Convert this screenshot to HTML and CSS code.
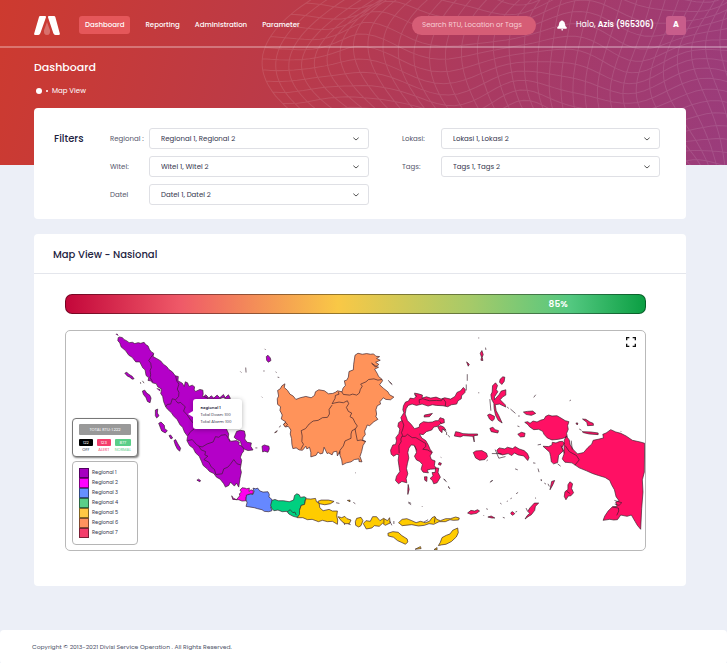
FILE: index.html
```html
<!DOCTYPE html>
<html lang="id">
<head>
<meta charset="utf-8">
<meta name="viewport" content="width=device-width, initial-scale=1">
<title>Dashboard</title>
<link rel="stylesheet" href="styles.css">
</head>
<body>
<header class="hero">
  <svg class="mesh" viewBox="260 0 467 164" preserveAspectRatio="xMaxYMin slice" aria-hidden="true"><path id="mesh-lines"/></svg>
  <div class="topbar">
    <a class="logo" href="#" aria-label="Home">
      <svg viewBox="0 0 78 57" aria-hidden="true">
        <path d="M39 18 48 43Q50 57 39 57Q28 57 30 43Z" fill="#d9706c"/>
        <path d="M17 0H35L36 4 19 52Q17 57 13 57H3Q-1 57 1 51L15 3Z" fill="#fff"/>
        <path d="M43 0H60Q63 0 64 3L77 51Q79 57 74 57H64Q60 57 58 52L42 4Z" fill="#fff"/>
      </svg>
    </a>
    <nav class="nav">
      <a class="active" href="#">Dashboard</a>
      <a href="#">Reporting</a>
      <a href="#">Administration</a>
      <a href="#">Parameter</a>
    </nav>
    <input class="search" type="text" aria-label="Search" placeholder="Search RTU, Location or Tags">
    <button class="bell" aria-label="Notifications">
      <svg viewBox="0 0 30 33" aria-hidden="true"><path d="M13 2Q15-1 17 2Q24 4 24 12Q24 19 29 22Q31 26 27 26H3Q-1 26 1 22Q6 19 6 12Q6 4 13 2ZM13 27H18L17 31Q15 34 14 31Z" fill="#fff"/></svg>
    </button>
    <span class="hello">Halo, <b>Azis (965306)</b></span>
    <button class="avatar">A</button>
  </div>
  <div class="heading">
    <h1>Dashboard</h1>
    <div class="crumb"><i class="home"></i><i class="dot"></i><span>Map View</span></div>
  </div>
</header>

<main>
  <section class="card filters">
    <h2>Filters</h2>
    <div class="fields">
      <label for="regional">Regional :</label>
      <div class="select"><select id="regional"><option>Regional 1, Regional 2</option></select><svg viewBox="0 0 18 12"><path d="M1 2 9 9 17 2"/></svg></div>
      <label for="witel">Witel:</label>
      <div class="select"><select id="witel"><option>Witel 1, Witel 2</option></select><svg viewBox="0 0 18 12"><path d="M1 2 9 9 17 2"/></svg></div>
      <label for="datel">Datel</label>
      <div class="select"><select id="datel"><option>Datel 1, Datel 2</option></select><svg viewBox="0 0 18 12"><path d="M1 2 9 9 17 2"/></svg></div>
    </div>
    <div class="fields">
      <label for="lokasi">Lokasi:</label>
      <div class="select"><select id="lokasi"><option>Lokasi 1, Lokasi 2</option></select><svg viewBox="0 0 18 12"><path d="M1 2 9 9 17 2"/></svg></div>
      <label for="tags">Tags:</label>
      <div class="select"><select id="tags"><option>Tags 1, Tags 2</option></select><svg viewBox="0 0 18 12"><path d="M1 2 9 9 17 2"/></svg></div>
    </div>
  </section>

  <section class="card">
    <h2 class="card-title">Map View - Nasional</h2>
    <div class="card-body">
      <div class="scale"><span>85%</span></div>
      <div class="map">
        <svg class="islands" viewBox="65 330 581 220" role="img" aria-label="Peta Indonesia">
          <!-- Sumatra -->
          <g transform="translate(60 325) scale(.33333)" fill="#b400c8">
            <path d="M172 35 176 33 185 35 190 41 197 44 205 50 215 49 222 53 232 50 240 52 250 49 255 56 262 60 266 70 272 78 279 82 277 92 288 98 300 105 308 115 318 122 325 131 335 138 344 150 353 152 352 165 365 172 371 182 374 168 381 171 385 182 395 178 402 183 401 192 405 197 418 191 427 193 428 205 426 212 440 214 446 232 470 262 492 290 498 310 505 325 503 338 511 347 528 345 537 350 535 357 550 365 550 377 545 383 540 395 544 405 540 428 543 440 539 458 535 485 528 473 522 482 510 470 505 480 495 485 490 475 479 461 468 455 460 444 447 438 440 430 428 420 423 408 416 392 405 382 398 368 387 360 379 345 381 332 372 320 366 305 358 297 350 282 338 270 333 262 320 250 315 243 309 228 306 212 300 203 303 190 291 183 287 174 275 171 270 165 262 164 264 156 256 149 253 132 246 126 237 108 225 108 214 94 204 88 194 74 181 63 177 51 171 44Z"/>
            <path d="M278 85 270 95 264 104 270 112 272 125 268 134 270 147 268 155 276 168M345 150 348 165 355 175 350 190 355 200 354 212 345 222 335 219 330 235 320 236 315 243M345 224 352 232 360 230 368 238 374 243 369 256 380 268 388 280 396 290 402 297 401 310 390 318 382 330M381 345 395 342 408 357 416 362 425 364 440 355 458 349 465 333 475 335 482 329 495 327 505 338 508 348M415 362 422 373 435 378 433 388 442 392 430 402 445 410 452 424 462 432 466 447 485 445 490 430 502 425 510 416 520 402 530 415 541 418" fill="none"/>
            <path d="M192 142 198 139 205 146 214 151 220 159 214 160 207 154 200 151ZM245 196 252 193 258 202 267 208 271 217 268 231 260 227 256 216 248 206ZM284 253 291 250 290 262 295 270 288 277 284 270ZM294 293 301 289 311 299 312 309 320 315 314 322 303 316ZM325 330 330 328 336 337 331 340ZM340 345 345 342 352 355 360 368 357 377 350 370 344 358ZM618 92 623 88 630 96 632 104 624 109 619 103Z"/>
            <path d="M430 212 436 207 445 217 452 210 460 217 470 208 478 216 489 206 494 216 504 207 510 218 498 220 488 215 475 220 460 220 445 219ZM529 317 540 314 552 316 555 329 553 340 560 350 573 352 571 362 578 373 563 375 552 371 543 360 540 347 528 341 521 335ZM605 362 612 358 618 360 626 362 627 370 623 380 613 377 607 379ZM409 464 414 461 420 465 418 469ZM165 25 169 24 172 29M239 169 240 174M245 165 250 172M288 188 299 192 296 196M540 137 543 140M556 125 557 140M611 134 611 136M613 69 615 71M604 213 606 215M585 367 591 367"/>
          </g>
          <!-- Java -->
          <g transform="translate(160 390) scale(.33333)">
            <path fill="#f0e" d="M214 316 217 322 228 328 238 316 237 310 243 305 239 299 245 292 254 293 259 295 267 293 266 303 272 298 279 301 278 310 263 312 257 321 257 331 245 332 235 328 217 327Z"/>
            <path fill="#68f" d="M278 293 286 295 292 293 298 301 308 305 323 304 327 312 326 320 334 326 338 339 337 346 331 350 335 361 325 364 312 363 305 358 292 355 282 352 257 348 260 337 257 328 258 314 271 311 278 312 281 303Z"/>
            <path fill="#00d080" d="M335 330 344 327 354 331 370 331 387 334 400 329 403 315 410 310 417 313 421 321 432 319 438 322 434 332 435 344 423 345 419 358 422 371 411 381 399 378 386 371 380 363 366 364 353 359 341 361 335 355 331 345ZM380 365 390 358 398 367 404 365 408 374"/>
          </g>
          <!-- Bali, Nusa Tenggara, southern Maluku -->
          <g transform="translate(320 470) scale(.33333)">
            <path fill="#fc0" d="M-43 85-28 86-14 84-11 94-3 99-1 112 9 121 27 117 37 122 52 122 50 137 53 149 52 162 37 153 22 154 7 150-5 154-24 147-38 148-52 142-69 142-62 132-62 120-57 105-47 102ZM-7 93 3 89 25 89 42 93 31 100 14 103-2 100ZM54 139 65 142 74 138 81 145 93 149 88 160 75 160 65 153ZM106 154 110 144 123 141 129 151 123 166 116 170 107 165ZM130 160 138 151 151 153 158 139 170 139 180 151 191 144 203 151 209 142 211 158 196 165 188 159 178 168 163 166 156 173 139 176ZM236 157 247 147 261 145 276 151 289 157 302 153 317 157 329 153 337 142 345 138 351 147 362 151 378 145 392 145 408 140 419 143 417 149 401 150 391 148 377 154 358 154 342 162 328 160 314 165 296 167 276 163 247 166ZM204 189 219 184 235 186 246 196 262 206 264 215 257 222 244 216 233 211 221 201 205 197ZM356 226 362 216 367 202 380 195 391 191 399 180 414 173 416 187 410 200 395 214 379 222 365 224ZM286 237 302 229 304 235ZM343 238 352 232 352 239ZM82 90 90 89 90 94Z"/>
            <path fill="#ff1064" d="M444 128 454 120 465 122 474 118 480 122 471 129 454 132ZM575 126 580 124 586 130 579 135 574 130ZM617 146 623 136 631 129 625 123 632 112 645 98 658 98 648 108 646 120 636 133 626 139ZM740 88 735 78 737 64 746 57 746 43 752 34 760 40 757 54 763 67 755 76 747 77ZM505 140 515 137 526 143 517 143ZM697 33 706 30 700 44 692 58 695 43ZM265 42 268 57 264 72 264 58Z"/>
            <path d="M48 97 58 99M100 96 106 100M72 158 74 164M85 161 92 163M192 145V160M210 153 216 165M222 152V161M265 97 274 103M306 107 308 109M492 135 494 137M500 115 505 117M542 98 546 101M550 141 556 143M562 93 565 92M573 85 577 83M590 70 596 66M588 125 593 123M620 113 624 122M647 82 650 84M664 29 668 31M675 38 680 41M686 40 690 48M372 25 381 35M386 47 390 55M513 33 520 30M742 62 753 70M313 155 325 148M346 140 344 157" fill="none"/>
          </g>
          <!-- Kalimantan -->
          <g transform="translate(260 325) scale(.33333)" fill="#ff935a">
            <path d="M285 88 294 82 307 85 320 83 332 85 341 84 348 91 359 92 350 98 361 103 347 109 357 116 346 123 335 112 348 121 356 124 344 130 352 143 356 152 366 160 368 165 359 177 370 187 384 198 389 207 402 214 392 222 378 221 370 216 360 228 362 235 352 240 348 252 350 265 348 273 354 281 342 288 329 300 322 298 318 308 314 316 316 327 309 336 308 344 317 347 309 360 305 378 300 393 306 409 297 408 297 400 283 402 273 409 259 412 247 418 245 403 240 390 239 378 232 391 230 377 220 379 216 388 206 382 201 384 192 365 188 383 180 385 174 379 168 389 152 394 152 380 148 365 140 370 137 362 127 374 117 373 108 367 98 369 95 356 94 339 90 325 92 313 84 302 76 304 70 295 77 289 63 280 66 268 59 254 61 243 52 236 51 219 55 211 52 194 60 189 65 180 74 174 72 185 82 194 89 205 99 211 107 221 120 216 137 212 153 216 163 209 166 198 176 192 193 195 205 204 218 203 227 199 232 195 246 198 249 187 256 179 253 165 260 163 265 154 267 137 280 132 281 115Z"/>
            <path d="M245 198 250 206 269 208 278 205 290 208 298 202 301 191 307 181 302 175 318 168 326 161 342 159 354 163 366 161M234 198 237 205 226 209 225 218 216 234 222 232 237 229 250 231 262 225 266 234 259 245 265 257 275 262 270 273 279 278 285 291 292 301 286 310 276 315 273 325 273 338 255 346 250 361 240 374 238 386M216 238 207 251 208 265 202 275 187 276 174 284 159 286 147 295 136 309 123 315 126 331 125 348 130 356 122 371M285 309 288 325 292 345 303 343 317 348" fill="none"/>
            <path d="M70 297 76 290 82 297 75 304ZM43 321 51 315 48 320ZM56 305 62 300M385 163 391 171 397 176 389 168M285 442 287 442M14 69 15 70M10 136 12 136M46 138 49 140M52 154 57 155"/>
          </g>
          <!-- Sulawesi, Maluku, Papua -->
          <g transform="translate(380 325) scale(.33333)" fill="#ff1064">
            <path d="M71 240 77 229 86 226 91 217 103 219 109 211 104 202 115 204 128 208 127 217 140 213 153 217 169 214 184 220 195 216 213 220 226 212 232 200 243 195 251 185 257 191 256 200 246 210 245 219 235 225 231 235 215 237 204 243 190 240 170 239 158 237 145 241 127 235 110 239 97 235 85 239 79 249 76 265 83 285 94 296 104 309 118 305 120 295 131 288 145 290 158 289 167 285 176 285 181 276 193 280 194 291 183 294 173 302 162 304 156 313 140 318 130 327 119 325 126 337 138 345 146 359 151 371 158 380 151 391 155 402 166 406 164 420 170 430 152 431 142 434 146 442 130 440 124 431 128 417 120 408 110 403 104 392 110 381 108 370 103 359 94 358 87 368 84 381 87 397 83 413 80 429 84 445 79 459 81 472 66 468 56 475 47 465 50 452 60 438 57 419 55 404 57 388 51 386 41 392 34 386 32 374 39 358 47 357 50 346 48 336 57 324 60 310 54 302 56 291 66 285 63 276 72 261 69 252Z"/>
            <path d="M66 283 72 298 69 310 65 321 68 329 63 340 64 348 57 360 58 383M67 332 76 332 83 326 97 336 108 336 123 345 138 354 138 363 129 371 143 373 157 381M119 233 118 222 129 219 149 225 170 224 185 225 190 218 198 229 197 241M180 287 185 294M103 206 111 212M104 360 111 374" fill="none"/>
            <path d="M134 268 145 266 158 263 149 273 133 274ZM174 303 183 300 192 304 199 314 188 310 187 321 180 315ZM224 331 228 318 238 320 250 324 268 325 294 325 294 329 283 330 284 349 280 332 251 330 242 334ZM281 381 289 376 307 375 321 383 324 393 316 402 300 404 288 397ZM302 82 307 74 311 86 308 94 310 104 304 103 306 94ZM261 108 269 115 266 121ZM362 160 370 153 376 154 374 167 367 176 360 169ZM339 180 348 171 354 179 350 191 355 198 345 213 345 222 359 206 365 196 379 192 379 208 370 213 362 222 377 237 379 244 360 235 347 237 350 255 358 270 368 292 356 284 348 268 344 249 343 233 336 220 334 207 338 199ZM331 308 340 305 347 312 357 315 355 322 335 318ZM324 268 331 265 345 272 344 281 338 286 330 280ZM415 326 426 320 437 323 435 333 423 334ZM432 259 444 257 460 256 469 263 456 269 440 266ZM352 374 359 367 376 370 384 365 400 369 407 363 419 370 434 375 444 384 449 396 445 405 433 391 416 388 405 382 397 390 386 384 369 388 356 384ZM436 290 445 288 452 293 461 286 473 289 485 283 494 281 499 272 508 268 518 271 533 270 545 277 558 285 569 288 565 300 567 311 562 323 564 333 551 338 538 341 518 343 504 337 494 326 490 317 478 311 463 312 450 303 446 297ZM491 362 508 363 518 358 519 350 530 352 540 348 550 347 555 353 548 366 552 376 538 389 535 411 523 415 516 409 514 393 511 380 500 370ZM555 344 561 331 570 343 573 358 583 373 595 385 613 381 626 366 638 355 642 344 657 341 673 337 671 326 681 322 695 312 710 319 725 323 741 331 760 344 783 349 797 353 796 440 790 463 792 500 788 550 785 612 775 600 768 588 757 569 744 573 725 569 715 583 704 584 692 582 672 585 677 572 687 557 700 544 714 543 710 530 720 526 711 514 706 493 697 477 692 465 678 456 658 450 640 444 622 436 600 427 578 412 557 410 549 400 554 386ZM610 280 620 281 632 289 642 293 643 299 625 300 623 290ZM609 318 635 319 657 322 657 327 630 325 613 321ZM590 292 596 292 594 298ZM134 454 142 454 141 468 135 464ZM151 459 160 451 157 441 166 441 168 427 177 428 175 441 182 455 172 472 162 475 158 465ZM178 411 185 413 183 419 176 417Z"/>
            <path d="M558 360 570 378 592 390 600 403 587 419M545 360 556 383M576 345 579 372M700 545 718 548 719 557 713 570M706 525 728 532 720 540 707 536M183 395 185 396M190 311 201 320 200 328M204 328 211 335M263 145V165M260 176V194M296 36H299M318 65 319 72M296 201H299M331 220 334 255M383 244 388 248M393 250 408 263M416 271H421M414 301 420 303M463 215 469 207M571 225 575 223M725 316 726 318M347 372 358 398 378 393M337 384H366M321 406 325 403M461 412 468 413M476 429 479 440M407 430 415 433M484 463H488M331 471 339 465M192 461 198 465M206 485 210 489M86 530 94 534M475 358 485 356M535 415 544 422M600 310 607 314" fill="none"/>
          </g>
        </svg>
        <button class="expand" aria-label="Fullscreen"><svg viewBox="0 0 30 30"><path d="M2 10V2H10M20 2H28V10M28 20V28H20M10 28H2V20"/></svg></button>
        <div class="tip"><b>Regional 1</b><span>Total Down: 100</span><span>Total Alarm: 100</span></div>
        <div class="panels">
          <div class="stats">
            <div class="total">TOTAL RTU: 1.222</div>
            <div class="stat off"><b>122</b>OFF</div>
            <div class="stat alert"><b>123</b>ALERT</div>
            <div class="stat normal"><b>877</b>NORMAL</div>
          </div>
          <ul class="legend">
            <li class="r1">Regional 1</li>
            <li class="r2">Regional 2</li>
            <li class="r3">Regional 3</li>
            <li class="r4">Regional 4</li>
            <li class="r5">Regional 5</li>
            <li class="r6">Regional 6</li>
            <li class="r7">Regional 7</li>
          </ul>
        </div>
      </div>
    </div>
  </section>
</main>
<footer>Copyright © 2013-2021 Divisi Service Operation . All Rights Reserved.</footer>
<script src="mesh.js"></script>
</body>
</html>
```
FILE: styles.css
```css
* { box-sizing: border-box; }
body {
  margin: 0;
  min-height: 100vh;
  display: flex;
  flex-direction: column;
  background: #eceff7;
  color: #23233f;
  font: 7px/10px Poppins, Inter, sans-serif;
}
button, input, select { font: inherit; color: inherit; border: 0; margin: 0; padding: 0; background: none; }
a { color: inherit; text-decoration: none; }
h1, h2 { margin: 0; font-weight: 500; }
svg { display: block; }

.hero {
  position: relative;
  color: #fff;
  padding-bottom: 69px;
  background: linear-gradient(105deg, #cd3a2f 0%, #b93a4b 42%, #a93a63 68%, #9a3c7c 100%);
}
.mesh { position: absolute; top: 0; right: 0; height: 100%; width: 65%; }
.mesh path { fill: none; stroke: #fff; stroke-opacity: .11; stroke-width: 1; }
.topbar {
  position: relative;
  display: flex;
  align-items: center;
  height: 48px;
  padding: 4px 41px 0 34px;
  border-bottom: 2px solid rgba(255, 255, 255, .3);
}
.logo svg { width: 26px; height: 19px; }
.nav { display: flex; align-items: center; gap: 15px; margin: 0 auto 0 19px; font-weight: 500; }
.nav .active { padding: 4px 6px; border-radius: 3px; background: #e5575a; }
.search {
  width: 124px;
  height: 19px;
  padding: 0 8px 0 10px;
  border-radius: 10px;
  background: #d65d76;
}
.search::placeholder { color: #f6cdd5; opacity: 1; }
.bell { margin: 0 9px 0 21px; }
.bell svg { width: 10px; height: 11px; }
.hello { font-size: 8px; }
.hello b { font-weight: 600; }
.avatar { width: 20px; height: 19px; margin-left: 12px; border-radius: 3px; background: #c85d8b; font-size: 8px; font-weight: 700; }
.heading { position: relative; padding: 12px 34px 0; }
h1 { font-size: 11px; line-height: 14px; }
.crumb { display: flex; align-items: center; gap: 4px; padding: 12px 2px 0; }
.home { width: 6px; height: 6px; border-radius: 50%; background: #fff; }
.dot { width: 2px; height: 2px; border-radius: 50%; background: #fff; }

main { position: relative; margin: -57px 41px 44px 34px; display: grid; gap: 15px; }
.card { background: #fff; border-radius: 4px; }
.card h2 { font-size: 10px; line-height: 15px; }
.filters {
  display: grid;
  grid-template-columns: 56px minmax(0, 259fr) minmax(0, 291fr);
  padding: 20px 26px 14px 20px;
}
.filters h2 { padding-top: 3px; }
.fields {
  display: grid;
  grid-template-columns: 39px 1fr;
  gap: 7px 0;
  align-content: start;
  align-items: center;
  color: #55566b;
}
.fields + .fields { margin-left: 33px; }
.select { position: relative; }
.select select {
  display: block;
  width: 100%;
  height: 21px;
  padding: 0 24px 0 11px;
  border: 1px solid #dfe0e5;
  border-radius: 3px;
  appearance: none;
  background: #fff;
  color: #33344c;
}
.select svg { position: absolute; right: 10px; top: 9px; width: 6px; height: 4px; fill: none; stroke: #555; stroke-width: 3; pointer-events: none; }

.card-title { padding: 13px 19px 11px; border-bottom: 1px solid #e4e6ec; }
.card-body { display: grid; gap: 16px; padding: 20px 40px 35px 31px; }
.scale {
  position: relative;
  height: 20px;
  border: 1px solid rgba(0, 0, 0, .4);
  border-radius: 7px;
  background: linear-gradient(90deg, #c3063a, #ef5a68 20%, #f9c846 47%, #a5ca69 70%, #53c880 87%, #0a9e42) border-box;
}
.scale span { position: absolute; left: 85%; top: 4px; transform: translateX(-50%); color: #fff; font-size: 9px; font-weight: 600; }
.map { position: relative; border: 1px solid #b9b9b9; border-radius: 5px; overflow: hidden; }
.islands { width: 100%; height: auto; stroke: #38202c; stroke-width: 2; stroke-linejoin: round; }
.expand { position: absolute; right: 9px; top: 6px; }
.expand svg { width: 10px; height: 10px; fill: none; stroke: #111; stroke-width: 4; }

.tip {
  position: absolute;
  left: 22%;
  top: 31%;
  width: 49px;
  display: grid;
  padding: 5px 7px 4px;
  border-radius: 3px;
  background: #fff;
  box-shadow: 0 1px 5px rgba(0, 0, 0, .3);
  font-size: 4px;
  line-height: 7px;
  color: #33344a;
  white-space: nowrap;
}
.tip b { font-weight: 600; }
.tip::before { content: ""; position: absolute; left: -5px; top: 12px; border: 3px solid transparent; border-right: 5px solid #fff; border-left: 0; }
.panels { position: absolute; left: 6px; bottom: 5px; width: 66px; display: grid; gap: 4px; }
.stats {
  display: grid;
  grid-template-columns: repeat(3, 1fr);
  gap: 4px;
  padding: 5px 6px 4px;
  border: 1px solid #777;
  border-radius: 4px;
  background: #fff;
  box-shadow: 1px 1px 2px rgba(0, 0, 0, .5);
  font-size: 4px;
  line-height: 5px;
  text-align: center;
}
.total { grid-column: 1 / -1; line-height: 11px; background: #999; color: #fff; border-radius: 1px; }
.stat { display: flex; flex-direction: column; align-items: center; gap: 1px; }
.stat b { width: 100%; line-height: 7px; border-radius: 1px; color: #fff; font-weight: 400; }
.off b { background: #000; }
.alert { color: #f43e6c; }
.alert b { background: #f43e6c; }
.normal { color: #5ace88; }
.normal b { background: #5ace88; }
.legend { margin: 0; padding: 6px; list-style: none; border: 1px solid #b5b5b5; border-radius: 4px; background: #fff; font-size: 5px; color: #33344a; }
.legend li { display: flex; align-items: center; gap: 3px; height: 10px; }
.legend li::before { content: ""; width: 8px; height: 8px; border: 1px solid rgba(0, 0, 0, .5); background: var(--c) border-box; }
.r1 { --c: #a600c0; }
.r2 { --c: #f0f; }
.r3 { --c: #6690ff; }
.r4 { --c: #5ace88; }
.r5 { --c: #ffc844; }
.r6 { --c: #ff935f; }
.r7 { --c: #f43e6c; }

footer { margin-top: auto; padding: 12px 32px; border-radius: 4px; background: #fff; color: #4c5168; font-size: 6px; }
```
FILE: mesh.js
```js
// Wavy wireframe behind the header: two families of polylines over a warped grid.
const point = (u, v) => {
  const y = -30 + v * 220;
  const left = 268 + Math.pow((y - 62) / 62, 2) * 48;
  const fade = Math.min(1, u * 5);
  return [
    left + u * (770 - left) + fade * 8 * Math.sin(v * 8 + u * 9),
    y + fade * (11 * Math.sin(u * 17 + v * 4) + 3 * Math.sin(u * 31 - v * 6))
  ].map(n => n.toFixed(1)).join(' ');
};
const lines = [];
const steps = Array.from({ length: 61 }, (_, i) => i / 60);
for (let i = 0; i <= 36; i++) lines.push('M' + steps.map(t => point(i / 36, t)).join('L'));
for (let i = 0; i <= 20; i++) lines.push('M' + steps.map(t => point(t, i / 20)).join('L'));
document.getElementById('mesh-lines').setAttribute('d', lines.join(''));
```
